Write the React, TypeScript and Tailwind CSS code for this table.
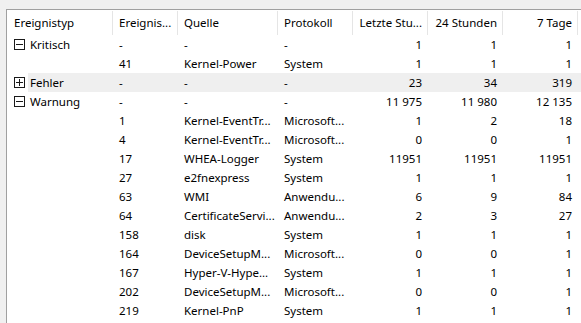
type Row = {
  type?: string;
  expand?: 'plus' | 'minus';
  id: string;
  source: string;
  log: string;
  hour: string;
  day: string;
  week: string;
  selected?: boolean;
};

const rows: Row[] = [
  { type: 'Kritisch', expand: 'minus', id: '-', source: '-', log: '-', hour: '1', day: '1', week: '1' },
  { id: '41', source: 'Kernel-Power', log: 'System', hour: '1', day: '1', week: '1' },
  { type: 'Fehler', expand: 'plus', id: '-', source: '-', log: '-', hour: '23', day: '34', week: '319', selected: true },
  { type: 'Warnung', expand: 'minus', id: '-', source: '-', log: '-', hour: '11 975', day: '11 980', week: '12 135' },
  { id: '1', source: 'Kernel-EventTr...', log: 'Microsoft...', hour: '1', day: '2', week: '18' },
  { id: '4', source: 'Kernel-EventTr...', log: 'Microsoft...', hour: '0', day: '0', week: '1' },
  { id: '17', source: 'WHEA-Logger', log: 'System', hour: '11951', day: '11951', week: '11951' },
  { id: '27', source: 'e2fnexpress', log: 'System', hour: '1', day: '1', week: '1' },
  { id: '63', source: 'WMI', log: 'Anwendu...', hour: '6', day: '9', week: '84' },
  { id: '64', source: 'CertificateServi...', log: 'Anwendu...', hour: '2', day: '3', week: '27' },
  { id: '158', source: 'disk', log: 'System', hour: '1', day: '1', week: '1' },
  { id: '164', source: 'DeviceSetupM...', log: 'Microsoft...', hour: '0', day: '0', week: '1' },
  { id: '167', source: 'Hyper-V-Hype...', log: 'System', hour: '1', day: '1', week: '1' },
  { id: '202', source: 'DeviceSetupM...', log: 'Microsoft...', hour: '0', day: '0', week: '1' },
  { id: '219', source: 'Kernel-PnP', log: 'System', hour: '1', day: '1', week: '1' },
];

function ExpandBox({ kind }: { kind: 'plus' | 'minus' }) {
  return (
    <svg width="11" height="11" viewBox="0 0 11 11" className="block">
      <rect x="0.5" y="0.5" width="10" height="10" fill="white" stroke="#1a1a1a" />
      <line x1="2" y1="5.5" x2="9" y2="5.5" stroke="#1a1a1a" />
      {kind === 'plus' && <line x1="5.5" y1="2" x2="5.5" y2="9" stroke="#1a1a1a" />}
    </svg>
  );
}

function HeaderCell({ label, width, right }: { label: string; width: string; right?: boolean }) {
  return (
    <div className={`${width} h-[25px] pt-[1px] shrink-0`}>
      <div
        className={`h-[24px] flex items-center border-r border-[#e5e5e5] whitespace-nowrap overflow-hidden ${
          right ? 'justify-end pr-[5px]' : 'pl-[6px]'
        }`}
      >
        {label}
      </div>
    </div>
  );
}

function SummaryRow({ row }: { row: Row }) {
  return (
    <div className="flex h-[19px] items-center">
      <div className="w-[21px] h-full shrink-0 pl-[7px] flex items-center">
        {row.expand && <ExpandBox kind={row.expand} />}
      </div>
      <div className={`flex flex-1 h-full items-center ${row.selected ? 'bg-[#efefef]' : ''}`}>
        <div className="w-[85px] shrink-0 pl-[2px] whitespace-nowrap">{row.type ?? ''}</div>
        <div className="w-[65px] shrink-0 pl-[6px] whitespace-nowrap overflow-hidden">{row.id}</div>
        <div className="w-[100px] shrink-0 pl-[6px] whitespace-nowrap overflow-hidden">{row.source}</div>
        <div className="w-[75px] shrink-0 pl-[6px] whitespace-nowrap overflow-hidden">{row.log}</div>
        <div className="w-[75px] shrink-0 pr-[6px] text-right whitespace-nowrap">{row.hour}</div>
        <div className="w-[75px] shrink-0 pr-[6px] text-right whitespace-nowrap">{row.day}</div>
        <div className="w-[75px] shrink-0 pr-[6px] text-right whitespace-nowrap">{row.week}</div>
      </div>
    </div>
  );
}

export default function App() {
  return (
    <div
      className="w-[581px] h-[323px] overflow-hidden bg-[#f0f0f0] pt-[9px] pl-[6px] flex flex-col text-[11.5px] text-black"
      style={{ fontFamily: '"Noto Sans", "Open Sans", sans-serif' }}
    >
      <div className="flex-1 bg-white border-t border-l border-[#a0a0a0] overflow-hidden">
        <div className="flex">
          <div className="w-[106px] h-[25px] pt-[1px] shrink-0">
            <div className="h-[24px] flex items-center border-r border-[#e5e5e5] pl-[7px]">Ereignistyp</div>
          </div>
          <HeaderCell label="Ereignis..." width="w-[65px]" />
          <HeaderCell label="Quelle" width="w-[100px]" />
          <HeaderCell label="Protokoll" width="w-[75px]" />
          <HeaderCell label="Letzte Stu..." width="w-[75px]" right />
          <HeaderCell label="24 Stunden" width="w-[75px]" right />
          <HeaderCell label="7 Tage" width="w-[75px]" right />
        </div>
        {rows.map((row, i) => (
          <SummaryRow key={i} row={row} />
        ))}
      </div>
    </div>
  );
}
